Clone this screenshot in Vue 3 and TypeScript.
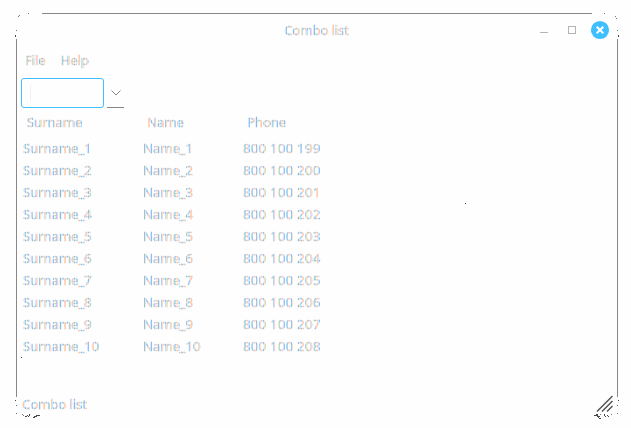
<script setup lang="ts">
interface Contact {
  surname: string
  name: string
  phone: string
}

const menus: string[] = ['File', 'Help']
const contacts: Contact[] = Array.from({ length: 10 }, (_, i) => ({
  surname: `Surname_${i + 1}`,
  name: `Name_${i + 1}`,
  phone: `800 100 ${199 + i}`,
}))
</script>

<template>
  <div class="screen">
    <main class="window">
      <header class="titlebar">
        <span class="title tint">Combo list</span>
        <svg class="controls" width="72" height="20" viewBox="0 0 72 20">
          <path d="M2 12.5h8" stroke="#b4b4b4" fill="none" />
          <rect x="30.5" y="6.5" width="7" height="7" stroke="#b4b4b4" fill="none" />
          <circle cx="62" cy="10" r="9.1" fill="#40bfff" />
          <path d="M58.7 6.7l6.6 6.6M65.3 6.7l-6.6 6.6" stroke="#fff" stroke-width="2" fill="none" />
        </svg>
      </header>
      <nav class="menu tint">
        <span v-for="item in menus" :key="item">{{ item }}</span>
      </nav>
      <div class="combo">
        <div class="field"><i class="caret"></i></div>
        <div class="drop">
          <svg width="10" height="6" viewBox="0 0 10 6"><path d="M.5.5L5 5 9.5.5" fill="none" stroke="#858585" /></svg>
        </div>
      </div>
      <div class="row head tint"><span>Surname</span><span>Name</span><span>Phone</span></div>
      <div v-for="c in contacts" :key="c.surname" class="row tint">
        <span>{{ c.surname }}</span><span>{{ c.name }}</span><span class="phone">{{ c.phone }}</span>
      </div>
      <footer class="status tint">Combo list</footer>
    </main>
    <svg class="frame" width="631" height="428" viewBox="0 0 631 428" shape-rendering="crispEdges" fill="none">
      <path d="M42 13.5H592M16.5 39V397M617.5 39V397" stroke="#888" />
      <path
        d="M18 16.5h1M19 15.5h1M28 13.5h1M16 30.5h1M604 13.5h1M615 16.5h1M616 18.5h1M617 30.5h1M16 405.5h1M16 413.5h1M617 405.5h1M617 413.5h1M22 414.5h1M23 415.5h1M600 414.5h1M611 414.5h1"
        stroke="#777"
      />
      <path
        d="M15.5 35v2M618.5 35v2M15 400.5h1M618 400.5h1M21 357.5h1M465 203.5h1M25 416.5h2M27 415.5h1M29 414.5h1M29 415.5h1M28 416.5h1M33 417.5h2M34 416.5h3M36 415.5h4M594 415.5h4M596 414.5h2M597 416.5h3M598 417.5h1M599 418.5h2M604.5 414v2M605 416.5h1M607 415.5h1M608 416.5h1"
        stroke="#484848"
      />
      <path
        d="M597 411.5l15.5-15.5M602 411.5l10.5-10.5M607 411.5l5.5-5.5"
        stroke="#505050"
        stroke-width="1.4"
        shape-rendering="auto"
      />
    </svg>
  </div>
</template>

<style>
body {
  margin: 0;
  background: #fefefe;
}
</style>

<style scoped>
.screen {
  position: relative;
  width: 631px;
  height: 428px;
  overflow: hidden;
  background: #fefefe;
  font: 13.33px/22px "Noto Sans", sans-serif;
  letter-spacing: -0.2px;
}
.tint {
  color: transparent;
  -webkit-text-stroke: 0.6px transparent;
  background-image: repeating-linear-gradient(
    90deg,
    #ffc79c 0 1px,
    #c6e2ff 1px 2px,
    #7dbaf8 2px 3px,
    #f8deb8 3px 4px,
    #a4d6d2 4px 5px,
    #9cc6ff 5px 6px,
    #ffcfc2 6px 7px
  );
  background-clip: text;
}
.window {
  box-sizing: border-box;
  width: 603px;
  height: 406px;
  margin: 0 0 0 16px;
  padding-top: 14px;
}
.titlebar {
  display: grid;
  grid-template-columns: 1fr auto 1fr;
  align-items: center;
  height: 32px;
}
.title {
  grid-column: 2;
  margin-right: 2px;
}
.controls {
  justify-self: end;
  margin-right: 9px;
}
.menu {
  display: flex;
  gap: 15px;
  height: 32px;
  padding-left: 9px;
  line-height: 29px;
}
.combo {
  display: flex;
  gap: 3px;
  height: 30px;
  padding-left: 5px;
}
.field {
  box-sizing: border-box;
  width: 83px;
  border: 1px solid #40bfff;
  border-radius: 3px;
  padding: 6px 8px;
}
.caret {
  display: block;
  width: 1px;
  height: 16px;
  background: #f0f0f0;
}
.drop {
  box-sizing: border-box;
  width: 17px;
  border-bottom: 1px solid #858585;
  display: flex;
  align-items: center;
  justify-content: center;
}
.row {
  display: grid;
  grid-template-columns: 120px 100px 1fr;
  height: 22px;
  padding-left: 7px;
  line-height: 22px;
}
.head {
  height: 29px;
  padding-left: 11px;
  line-height: 29px;
}
.phone {
  letter-spacing: 0.18px;
}
.status {
  margin-top: 36px;
  padding-left: 6px;
}
.frame {
  position: absolute;
  inset: 0;
  pointer-events: none;
}
</style>
